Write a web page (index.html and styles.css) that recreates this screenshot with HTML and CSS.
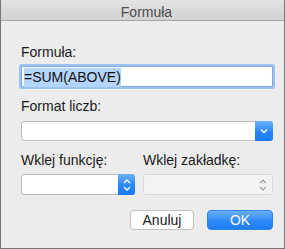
FILE: index.html
```html
<!DOCTYPE html>
<html lang="pl">

<head>
    <meta charset="UTF-8">
    <meta name="viewport" content="width=device-width, initial-scale=1.0">
    <title>Formuła</title>
    <link rel="stylesheet" href="styles.css">
</head>

<body>
    <div class="dialog">
        <!-- Title bar -->
        <div class="titlebar">Formuła</div>

        <div class="content">
            <div class="label">Formuła:</div>
            <div class="field"><span class="selected">=SUM(ABOVE)</span></div>

            <div class="label gap-big">Format liczb:</div>
            <div class="select wide">
                <span class="arrow">
                    <svg width="8" height="6" viewBox="0 0 8 6"><polyline points="1,1.5 4,4.5 7,1.5" fill="none" stroke="#fff" stroke-width="1.4"/></svg>
                </span>
            </div>

            <div class="row">
                <div class="col">
                    <div class="label gap-big">Wklej funkcję:</div>
                    <div class="select tall">
                        <span class="arrow stepper">
                            <svg width="8" height="14" viewBox="0 0 8 14"><polyline points="1,5 4,2 7,5" fill="none" stroke="#fff" stroke-width="1.3"/><polyline points="1,9 4,12 7,9" fill="none" stroke="#fff" stroke-width="1.3"/></svg>
                        </span>
                    </div>
                </div>
                <div class="col">
                    <div class="label gap-big">Wklej zakładkę:</div>
                    <div class="select tall disabled">
                        <span class="arrow plain">
                            <svg width="8" height="14" viewBox="0 0 8 14"><polyline points="1,5 4,2 7,5" fill="none" stroke="#9a9a9a" stroke-width="1.1"/><polyline points="1,9 4,12 7,9" fill="none" stroke="#9a9a9a" stroke-width="1.1"/></svg>
                        </span>
                    </div>
                </div>
            </div>

            <!-- Buttons -->
            <div class="buttons">
                <button class="btn">Anuluj</button>
                <button class="btn primary">OK</button>
            </div>
        </div>
    </div>
</body>

</html>
```

FILE: styles.css
```css
body {
    margin: 0;
    padding: 0;
    font-family: 'Liberation Sans', Arial, sans-serif;
    font-size: 14px;
    color: #1a1a1a;
    background: #ececec;
}

.dialog {
    width: 285px;
    height: 249px;
    box-sizing: border-box;
    border: 1px solid #777;
    border-top: none;
    background: #ececec;
}

/* Title bar */
.titlebar {
    height: 21px;
    box-sizing: border-box;
    padding: 4px 0 0 8px;
    line-height: 16px;
    text-align: center;
    color: #4b4b4b;
    background: linear-gradient(#e3e3e3, #d2d2d2);
    border-bottom: 1px solid #a6a6a6;
}

.content {
    padding: 23px 11px 0 20px;
}

.label {
    line-height: 16px;
    white-space: nowrap;
}

.gap-big {
    margin-top: 11px;
}

/* Formula input with focus ring */
.field {
    margin-top: 6px;
    height: 21px;
    box-sizing: border-box;
    padding: 1px 0 0 2px;
    background: #fff;
    border: 1px solid #7fa9e9;
    box-shadow: 0 0 0 2px #9ec3f3;
    border-radius: 1px;
}

.selected {
    display: inline-block;
    vertical-align: top;
    line-height: 19px;
    background: #b4d5fd;
    color: #111;
}

/* Popup selects */
.select {
    display: flex;
    justify-content: flex-end;
    box-sizing: border-box;
    background: #fff;
    border: 1px solid #bcbcbc;
    border-radius: 3px;
}

.select.wide {
    margin-top: 7px;
    height: 20px;
}

.select.tall {
    margin-top: 6px;
    height: 21px;
}

.select.disabled {
    background: #f3f3f3;
    border-color: #d8d8d8;
}

.arrow {
    display: flex;
    align-items: center;
    justify-content: center;
    width: 18px;
    margin: -1px -1px -1px 0;
    border-radius: 0 3px 3px 0;
    background: linear-gradient(#6cb2fb, #2a86f7 55%, #1a7cf4);
}

.arrow.stepper {
    width: 17px;
}

.arrow.plain {
    background: none;
    width: 20px;
}

.row {
    display: grid;
    grid-template-columns: 114px 1fr;
    gap: 8px;
}

/* Buttons */
.buttons {
    display: flex;
    justify-content: flex-end;
    gap: 13px;
    margin-top: 15px;
}

.btn {
    height: 20px;
    width: 64px;
    padding: 0;
    font-family: inherit;
    font-size: 14px;
    color: #1a1a1a;
    background: #fff;
    border: 1px solid #c2c2c2;
    border-radius: 4px;
}

.btn.primary {
    width: 66px;
    color: #fff;
    border-color: #2b85f0;
    background: linear-gradient(#6aaffb, #2e89f8 55%, #1c7ef5);
}
```
